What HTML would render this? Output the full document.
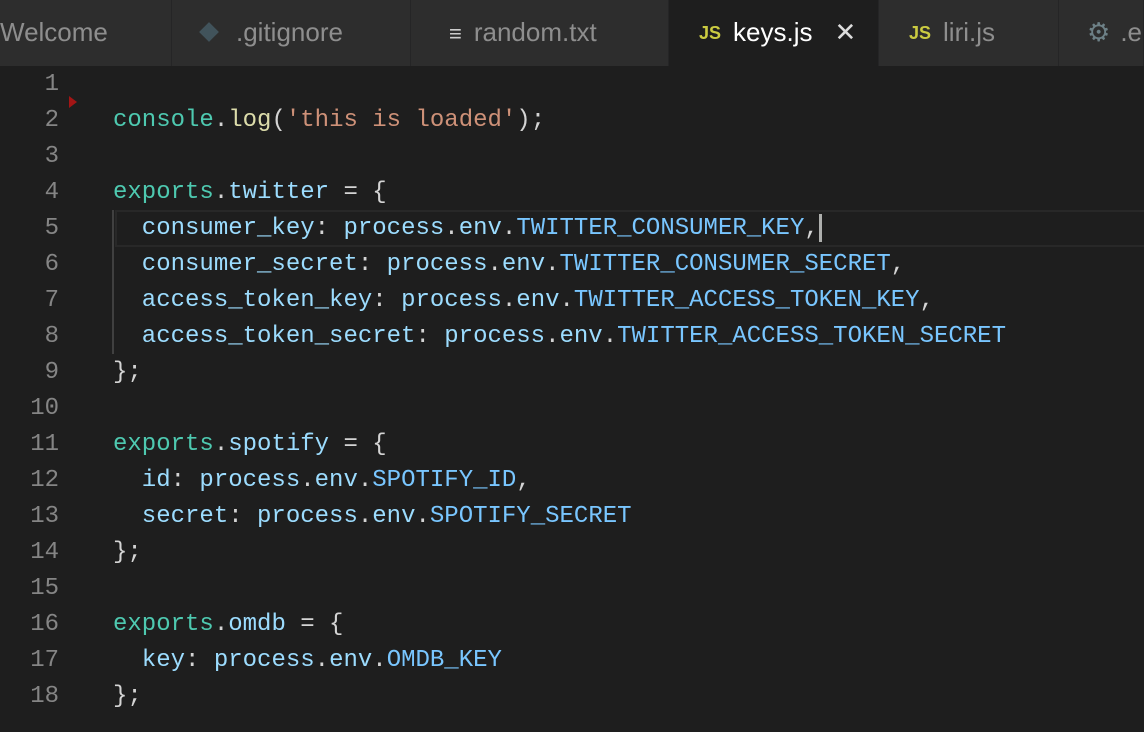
<!DOCTYPE html>
<html><head><style>
body{margin:0;width:1144px;height:732px;background:#1e1e1e;overflow:hidden;position:relative;font-family:"Liberation Sans",sans-serif}
.tabs{position:absolute;left:0;top:0;width:1144px;height:66px;background:#252526}
.tab{position:absolute;top:0;height:66px;background:#2d2d2d;color:#8e8e8e;font-size:26px;line-height:64px;white-space:nowrap;overflow:hidden;border-right:1px solid #252526;box-sizing:border-box}
.tab.act{background:#1e1e1e;color:#fff}
.js{color:#cbcb41;font-weight:bold;font-size:18px;margin-right:12px;vertical-align:2px}
.code{position:absolute;left:0;top:67px;font-family:"Liberation Mono",monospace;font-size:24px}
.l{height:36px;line-height:36px;white-space:pre;position:relative}
.n{display:inline-block;width:59px;text-align:right;color:#858585;margin-right:54px}
.t{color:#4ec9b0}.f{color:#dcdcaa}.s{color:#ce9178}.p{color:#9cdcfe}.c{color:#79c6ff}.d{color:#d4d4d4}
</style></head><body>
<div class="tabs">
<div class="tab" style="left:0;width:172px;padding-left:0">Welcome</div>
<div class="tab" style="left:172px;width:239px;padding-left:30px"><span style="display:inline-block;width:14px;height:14px;background:#41535b;transform:rotate(45deg);margin-right:20px;vertical-align:2px"></span>.gitignore</div>
<div class="tab" style="left:411px;width:258px;padding-left:38px"><span style="color:#ccc;font-size:22px;margin-right:12px">≡</span>random.txt</div>
<div class="tab act" style="left:669px;width:210px;padding-left:30px"><span class="js">JS</span>keys.js<span style="margin-left:22px;font-size:26px;color:#ddd">✕</span></div>
<div class="tab" style="left:879px;width:180px;padding-left:30px"><span class="js">JS</span>liri.js</div>
<div class="tab" style="left:1059px;width:85px;padding-left:28px"><span style="color:#6d8086;font-size:26px;margin-right:10px">⚙</span>.env</div>
</div>
<div style="position:absolute;left:69px;top:96px;width:0;height:0;border-top:6px solid transparent;border-bottom:6px solid transparent;border-left:8px solid #a31515"></div>
<div style="position:absolute;left:115px;top:210px;right:0;height:33px;border:2px solid #282828;border-right:none"></div>
<div style="position:absolute;left:112px;top:210px;width:2px;height:144px;background:#404040"></div>
<div class="code">
<div class="l"><span class="n">1</span></div>
<div class="l"><span class="n">2</span><span class="t">console</span><span class="d">.</span><span class="f">log</span><span class="d">(</span><span class="s">'this is loaded'</span><span class="d">);</span></div>
<div class="l"><span class="n">3</span></div>
<div class="l"><span class="n">4</span><span class="t">exports</span><span class="d">.</span><span class="p">twitter</span><span class="d"> = {</span></div>
<div class="l"><span class="n">5</span><span class="p">  consumer_key</span><span class="d">: </span><span class="p">process</span><span class="d">.</span><span class="p">env</span><span class="d">.</span><span class="c">TWITTER_CONSUMER_KEY</span><span class="d">,</span><span style="display:inline-block;width:3px;height:28px;background:#aeafad;vertical-align:middle"></span></div>
<div class="l"><span class="n">6</span><span class="p">  consumer_secret</span><span class="d">: </span><span class="p">process</span><span class="d">.</span><span class="p">env</span><span class="d">.</span><span class="c">TWITTER_CONSUMER_SECRET</span><span class="d">,</span></div>
<div class="l"><span class="n">7</span><span class="p">  access_token_key</span><span class="d">: </span><span class="p">process</span><span class="d">.</span><span class="p">env</span><span class="d">.</span><span class="c">TWITTER_ACCESS_TOKEN_KEY</span><span class="d">,</span></div>
<div class="l"><span class="n">8</span><span class="p">  access_token_secret</span><span class="d">: </span><span class="p">process</span><span class="d">.</span><span class="p">env</span><span class="d">.</span><span class="c">TWITTER_ACCESS_TOKEN_SECRET</span></div>
<div class="l"><span class="n">9</span><span class="d">};</span></div>
<div class="l"><span class="n">10</span></div>
<div class="l"><span class="n">11</span><span class="t">exports</span><span class="d">.</span><span class="p">spotify</span><span class="d"> = {</span></div>
<div class="l"><span class="n">12</span><span class="p">  id</span><span class="d">: </span><span class="p">process</span><span class="d">.</span><span class="p">env</span><span class="d">.</span><span class="c">SPOTIFY_ID</span><span class="d">,</span></div>
<div class="l"><span class="n">13</span><span class="p">  secret</span><span class="d">: </span><span class="p">process</span><span class="d">.</span><span class="p">env</span><span class="d">.</span><span class="c">SPOTIFY_SECRET</span></div>
<div class="l"><span class="n">14</span><span class="d">};</span></div>
<div class="l"><span class="n">15</span></div>
<div class="l"><span class="n">16</span><span class="t">exports</span><span class="d">.</span><span class="p">omdb</span><span class="d"> = {</span></div>
<div class="l"><span class="n">17</span><span class="p">  key</span><span class="d">: </span><span class="p">process</span><span class="d">.</span><span class="p">env</span><span class="d">.</span><span class="c">OMDB_KEY</span></div>
<div class="l"><span class="n">18</span><span class="d">};</span></div>
</div>
</body></html>
